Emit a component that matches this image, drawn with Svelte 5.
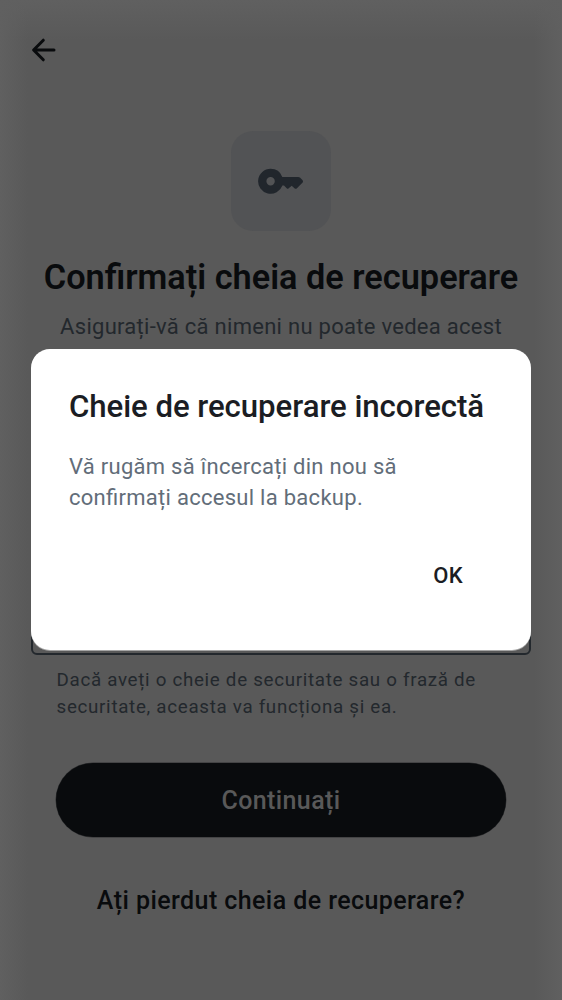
<script>
  const title = 'Confirmați cheia de recuperare';
</script>

<div class="screen">
  <main class="page">
    <header>
      <button class="back" aria-label="Înapoi">
        <svg width="26" height="26" viewBox="0 0 26 26"><path d="M12.300 3.200 2.600 13l9.700 9.800M3.100 13h19.900" /></svg>
      </button>
    </header>
    <div class="tile">
      <svg width="46" height="26" viewBox="0 0 46 26">
        <path fill-rule="evenodd" d="M12.600.8A12.500 12.500 0 1 0 24.400 17.500H26l2.700 2.800q1 1 2 0l3-2.600 3 2.700q1 .9 2 0l5.700-5.700q1.200-1.300 0-2.600l-2.200-2.300Q41.300 9 40.100 9H24.300A12.500 12.500 0 0 0 12.600.8Zm0 8.300a4.200 4.200 0 1 1 0 8.400a4.200 4.200 0 0 1 0-8.400Z" />
      </svg>
    </div>
    <h1>{title}</h1>
    <p class="intro">Asigurați-vă că nimeni nu poate vedea acest</p>
    <div class="field"></div>
    <p class="hint">Dacă aveți o cheie de securitate sau o frază de<br />securitate, aceasta va funcționa și ea.</p>
    <button class="continue">Continuați</button>
    <button class="lost">Ați pierdut cheia de recuperare?</button>
  </main>

  <div class="overlay">
    <section class="dialog" role="alertdialog" aria-labelledby="dialog-title">
      <h2 id="dialog-title">Cheie de recuperare incorectă</h2>
      <p>Vă rugăm să încercați din nou să<br />confirmați accesul la backup.</p>
      <button class="ok">OK</button>
    </section>
  </div>
</div>

<style>
  :global(body) { background: #595959; }
  .screen {
    position: relative;
    width: 562px;
    height: 1000px;
    overflow: hidden;
    font-family: Roboto, sans-serif;
    font-feature-settings: "liga" 1;
    white-space: nowrap;
    background:
      linear-gradient(to right, #606060, #60606000 28px),
      linear-gradient(to left, #606060, #60606000 28px),
      linear-gradient(to bottom, #606060, #60606000 40px),
      #595959;
  }
  h1, h2, p { margin: 0; }
  button { border: 0; padding: 0; margin: 0; background: none; font: inherit; font-feature-settings: inherit; color: inherit; }
  .page { display: flex; flex-direction: column; align-items: center; color: #090b0d; }
  header { align-self: stretch; height: 131px; padding: 37px 0 0 31px; box-sizing: border-box; }
  .back { display: block; width: 26px; height: 26px; }
  svg { display: block; }
  .back path { fill: none; stroke: #090b0d; stroke-width: 3; stroke-linecap: round; stroke-linejoin: round; }
  .tile { width: 100px; height: 100px; border-radius: 22px; background: #525355; display: grid; place-items: center; }
  .tile path { fill: #21262c; }
  h1 { margin-top: 26px; font-size: 34.3px; line-height: 40px; font-weight: 600; }
  .intro { margin-top: 14px; font-size: 22px; line-height: 31px; letter-spacing: .28px; color: #23282d; }
  .field { width: 500px; height: 230px; margin-top: 83px; box-sizing: border-box; border: 2px solid #23282d; border-radius: 6px; }
  .hint { width: 449px; margin-top: 12px; font-size: 18.750px; line-height: 27px; letter-spacing: .7px; color: #23282d; }
  .continue { width: 450px; height: 74px; margin-top: 42px; border-radius: 37px; background: #090b0d; box-shadow: 0 0 0 .5px #303132; color: #595959; font-size: 25px; font-weight: 500; letter-spacing: .38px; }
  .lost { height: 75px; margin-top: 26px; font-size: 25px; font-weight: 500; letter-spacing: .42px; }
  .overlay { position: absolute; inset: 0; display: grid; justify-content: center; align-content: start; padding-top: 349px; }
  .dialog { width: 500px; height: 301px; box-sizing: border-box; padding: 38px; border-radius: 19px; background: #fff; box-shadow: 0 1px #a5a5a5; display: flex; flex-direction: column; color: #1b1d23; }
  h2 { font-size: 31.200px; line-height: 39px; font-weight: 500; letter-spacing: -.06px; }
  .dialog p { margin-top: 24.500px; font-size: 22px; line-height: 31px; letter-spacing: .28px; color: #626d79; }
  .ok { align-self: flex-end; margin: 31.500px 30px 0 0; height: 62px; flex-shrink: 0; font-size: 22px; font-weight: 500; letter-spacing: .3px; }
</style>
